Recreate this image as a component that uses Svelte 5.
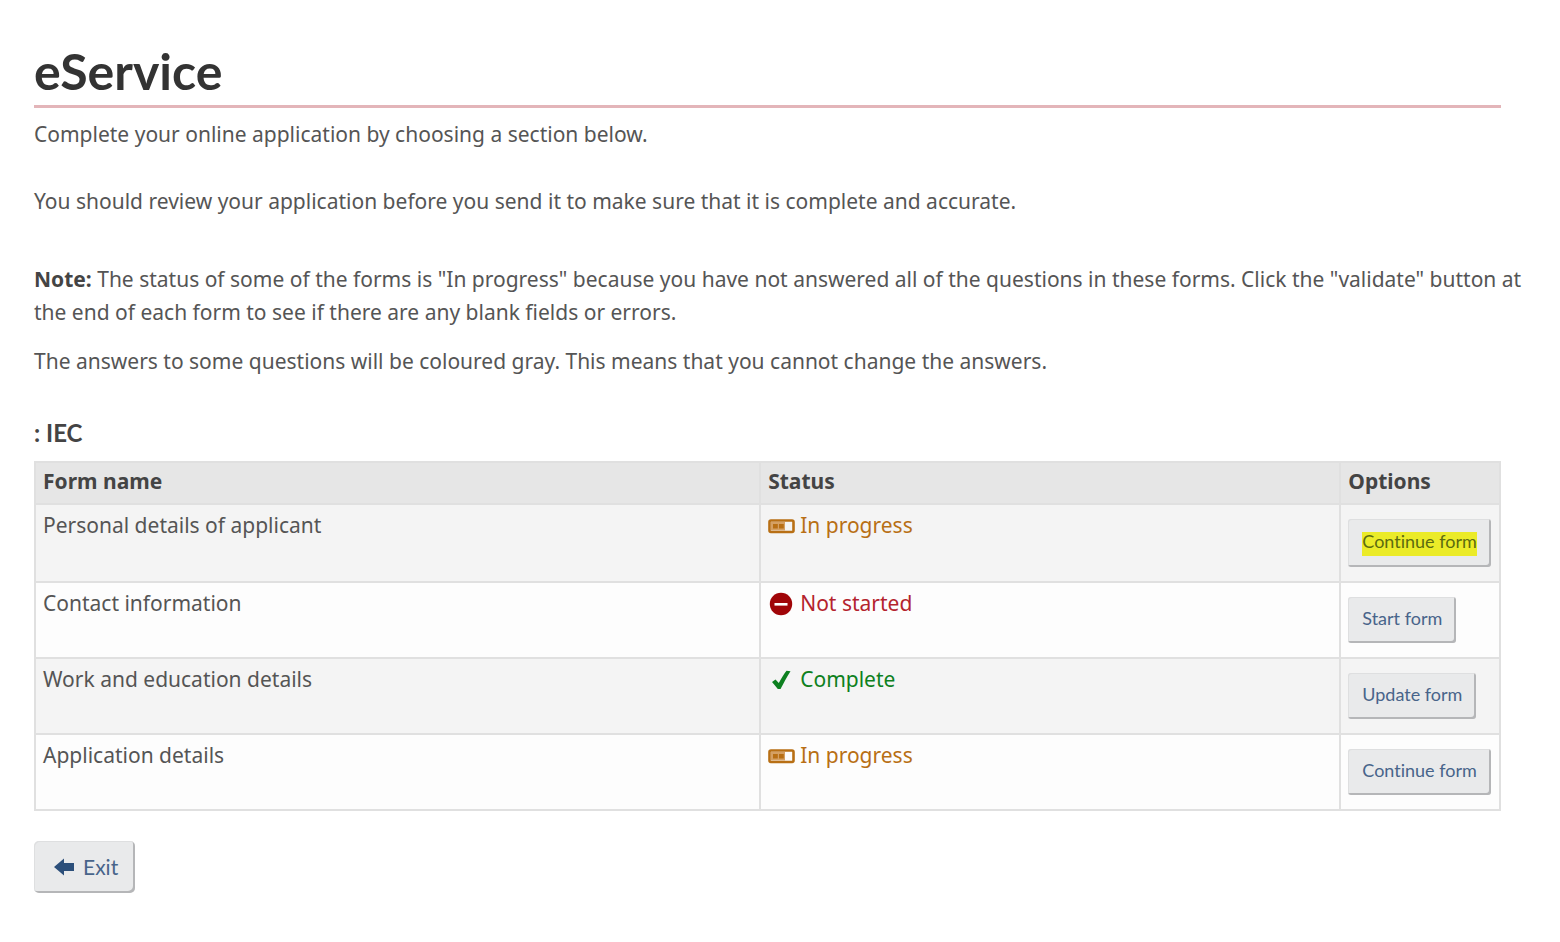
<script lang="ts">

  type Status = 'progress' | 'missing' | 'complete';

  interface FormRow {
    name: string;
    status: Status;
    action: string;
    highlighted?: boolean;
  }

  const labels: Record<Status, string> = {
    progress: 'In progress',
    missing: 'Not started',
    complete: 'Complete',
  };

  const forms: FormRow[] = [
    { name: 'Personal details of applicant', status: 'progress', action: 'Continue form', highlighted: true },
    { name: 'Contact information', status: 'missing', action: 'Start form' },
    { name: 'Work and education details', status: 'complete', action: 'Update form' },
    { name: 'Application details', status: 'progress', action: 'Continue form' },
  ];

</script>

<main class="page">
  <h1 class="title">eService</h1>

  <p class="lead">Complete your online application by choosing a section below.</p>
  <p class="review">You should review your application before you send it to make sure that it is complete and accurate.</p>
  <p><strong>Note:</strong> The status of some of the forms is "In progress" because you have not answered all of the questions in these forms. Click the "validate" button at the end of each form to see if there are any blank fields or errors.</p>
  <p>The answers to some questions will be coloured gray. This means that you cannot change the answers.</p>

  <h2 class="subtitle">: IEC</h2>

  <table class="forms">
    <thead>
      <tr>
        <th class="col-name">Form name</th>
        <th class="col-status">Status</th>
        <th>Options</th>
      </tr>
    </thead>
    <tbody>
      {#each forms as form}
        <tr>
          <td>{form.name}</td>
          <td>
            <span class="status {form.status}">
              <svg class="icon" viewBox="0 0 28 24" aria-hidden="true">
                {#if form.status === 'progress'}
                  <rect x="1.5" y="6.5" width="24" height="11.5" rx="1.5" fill="none" stroke="currentColor" stroke-width="2.6" />
                  <rect x="3" y="8" width="14" height="8.5" fill="#d5a063" />
                  <rect x="5" y="10" width="4.8" height="4.5" fill="currentColor" />
                  <rect x="11" y="10" width="4.8" height="4.5" fill="currentColor" />
                {:else if form.status === 'missing'}
                  <circle cx="13" cy="12" r="11.2" fill="currentColor" />
                  <rect x="6.5" y="11" width="13" height="2.6" fill="#fff" />
                {:else}
                  <path d="M4 14 L7.5 11.5 L10.8 15 C13.5 10 16 6 18.5 2.8 L22.5 3.2 C18.5 9 16 15 12.5 21 L9.8 21 C8 18.500 6 16.500 4 14 Z" fill="currentColor" />
                {/if}
              </svg>
              <span class="label">{labels[form.status]}</span>
            </span>
          </td>
          <td class="options">
            <button class="btn" class:highlighted={form.highlighted} type="button">
              <span>{form.action}</span>
            </button>
          </td>
        </tr>
      {/each}
    </tbody>
  </table>

  <button class="btn exit" type="button">
    <svg class="arrow" viewBox="0 0 20 18" aria-hidden="true">
      <path d="M0 9 L10 0.500 L10 5 L20 5 L20 13 L10 13 L10 17.500 Z" fill="currentColor" />
    </svg>
    <span>Exit</span>
  </button>
</main>

<style>

  :global(body) {
    margin: 0;
    background: #fff;
  }

  .page {
    padding: 41px 59px 48px 34px;
    color: #555;
    font-family: "Noto Sans", sans-serif;
    font-size: 21px;
    line-height: 33px;
  }

  .title {
    margin: 0 0 10px;
    padding-bottom: 4px;
    border-bottom: 3px solid #e3b5b9;
    color: #333;
    font-family: Lato, sans-serif;
    font-size: 50px;
    line-height: 60px;
  }

  /* text runs a little past the table edge */
  p {
    margin: 0 -28px 16px 0;
  }

  .lead {
    margin-bottom: 34px;
  }

  .review {
    margin-bottom: 45px;
  }

  strong {
    color: #444;
  }

  .subtitle {
    margin: 38px 0 12px;
    color: #444;
    font-family: Lato, sans-serif;
    font-size: 24px;
    line-height: 33px;
  }

  .forms {
    width: 100%;
    border: 2px solid #e4e4e4;
    border-collapse: collapse;
    table-layout: fixed;
  }

  th {
    height: 42px;
    padding: 0 7px 4px;
    box-sizing: border-box;
    background: #e6e6e6;
    color: #444;
    text-align: left;
  }

  th,
  td {
    border: 2px solid #e0e0e0;
  }

  td {
    padding: 4px 7px 14px;
    background: #fdfdfd;
    vertical-align: top;
  }

  tbody tr:nth-child(odd) td {
    background: #f4f4f4;
  }

  .col-name {
    width: 49.5%;
  }

  .col-status {
    width: 39.6%;
  }

  .options {
    padding-top: 14px;
  }

  .status {
    display: flex;
    align-items: center;
    gap: 4px;
  }

  .icon {
    width: 28px;
    height: 24px;
  }

  .progress {
    color: #b86f14;
  }

  .missing {
    color: #a00508;
  }

  .missing .label {
    color: #b4232d;
  }

  .complete {
    color: #0d8020;
  }

  .btn {
    display: flex;
    align-items: center;
    height: 46px;
    padding: 0 14px 4px;
    border: 0;
    border-radius: 3px;
    background: #e9eaeb;
    box-shadow: inset 1px 1px #dedfe0, inset -2px -2px #b5b6b8;
    color: #48648a;
    font-family: Lato, sans-serif;
    font-size: 18px;
    font-variant-ligatures: none;
    line-height: 24px;
    white-space: nowrap;
    cursor: pointer;
  }

  .btn:hover {
    background: #dcdee1;
  }

  .highlighted {
    height: 48px;
    padding-bottom: 1px;
    color: #5c6b10;
  }

  /* marker stroke sits low on the text */
  .highlighted span {
    padding-bottom: 3px;
    background: linear-gradient(transparent 3px, #ebeb28 3px);
  }

  .exit {
    gap: 9px;
    height: 52px;
    margin-top: 30px;
    padding: 0 17px 0 20px;
    border-radius: 5px;
    font-size: 21px;
  }

  .arrow {
    width: 20px;
    height: 18px;
    color: #2c4f7a;
  }

</style>
